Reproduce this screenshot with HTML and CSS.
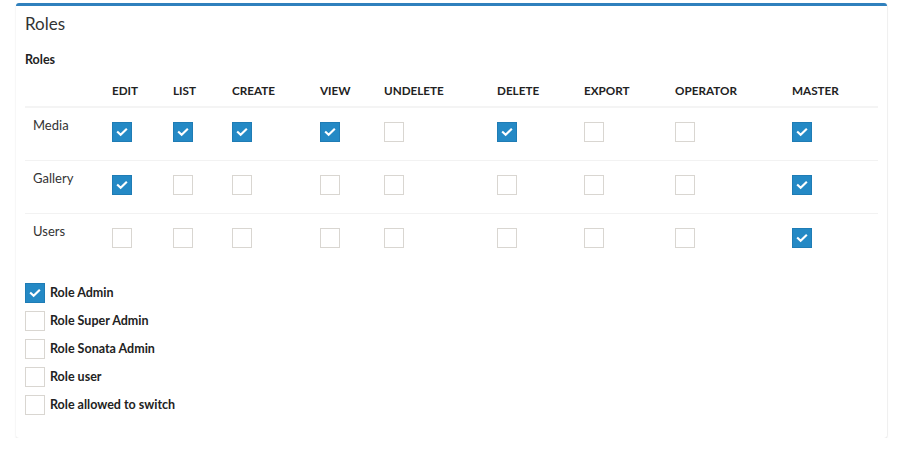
FILE: index.html
```html
<!DOCTYPE html>
<html>
<head>
<meta charset="utf-8">
<link rel="stylesheet" href="styles.css">
</head>
<body>
<div class="box">
  <div class="box-header"><h3 class="box-title">Roles</h3></div>
  <div class="box-body">
    <div class="group-label">Roles</div>
    <table class="roles">
      <colgroup>
        <col class="c-name"><col class="c-edit"><col class="c-list"><col class="c-create"><col class="c-view"><col class="c-undelete"><col class="c-delete"><col class="c-export"><col class="c-operator"><col class="c-master">
      </colgroup>
      <thead>
        <tr><th></th><th>EDIT</th><th>LIST</th><th>CREATE</th><th>VIEW</th><th>UNDELETE</th><th>DELETE</th><th>EXPORT</th><th>OPERATOR</th><th>MASTER</th></tr>
      </thead>
      <tbody>
        <tr>
          <td class="name">Media</td>
          <td><span class="cb on"><svg viewBox="0 0 20 20"><path d="M5.5 10.2l3 2.8 6-5.8"/></svg></span></td>
          <td><span class="cb on"><svg viewBox="0 0 20 20"><path d="M5.5 10.2l3 2.8 6-5.8"/></svg></span></td>
          <td><span class="cb on"><svg viewBox="0 0 20 20"><path d="M5.5 10.2l3 2.8 6-5.8"/></svg></span></td>
          <td><span class="cb on"><svg viewBox="0 0 20 20"><path d="M5.5 10.2l3 2.8 6-5.8"/></svg></span></td>
          <td><span class="cb"></span></td>
          <td><span class="cb on"><svg viewBox="0 0 20 20"><path d="M5.5 10.2l3 2.8 6-5.8"/></svg></span></td>
          <td><span class="cb"></span></td>
          <td><span class="cb"></span></td>
          <td><span class="cb on"><svg viewBox="0 0 20 20"><path d="M5.5 10.2l3 2.8 6-5.8"/></svg></span></td>
        </tr>
        <tr>
          <td class="name">Gallery</td>
          <td><span class="cb on"><svg viewBox="0 0 20 20"><path d="M5.5 10.2l3 2.8 6-5.8"/></svg></span></td>
          <td><span class="cb"></span></td>
          <td><span class="cb"></span></td>
          <td><span class="cb"></span></td>
          <td><span class="cb"></span></td>
          <td><span class="cb"></span></td>
          <td><span class="cb"></span></td>
          <td><span class="cb"></span></td>
          <td><span class="cb on"><svg viewBox="0 0 20 20"><path d="M5.5 10.2l3 2.8 6-5.8"/></svg></span></td>
        </tr>
        <tr>
          <td class="name">Users</td>
          <td><span class="cb"></span></td>
          <td><span class="cb"></span></td>
          <td><span class="cb"></span></td>
          <td><span class="cb"></span></td>
          <td><span class="cb"></span></td>
          <td><span class="cb"></span></td>
          <td><span class="cb"></span></td>
          <td><span class="cb"></span></td>
          <td><span class="cb on"><svg viewBox="0 0 20 20"><path d="M5.5 10.2l3 2.8 6-5.8"/></svg></span></td>
        </tr>
      </tbody>
    </table>
    <ul class="role-list">
      <li><span class="cb on"><svg viewBox="0 0 20 20"><path d="M5.5 10.2l3 2.8 6-5.8"/></svg></span><span class="role-name">Role Admin</span></li>
      <li><span class="cb"></span><span class="role-name">Role Super Admin</span></li>
      <li><span class="cb"></span><span class="role-name">Role Sonata Admin</span></li>
      <li><span class="cb"></span><span class="role-name">Role user</span></li>
      <li><span class="cb"></span><span class="role-name">Role allowed to switch</span></li>
    </ul>
  </div>
</div>
</body>
</html>
```
FILE: styles.css
```css
html, body {
  margin: 0;
  background: #ffffff;
}
body {
  padding: 3px 13px 0 16px;
  font-family: "Lato", "Liberation Sans", sans-serif;
  font-size: 13px;
  color: #333333;
}
.box {
  border-top: 3px solid #2f80bd;
  border-radius: 3px;
  background: #ffffff;
  box-shadow: 0 1px 2px rgba(0, 0, 0, 0.12), 1px 0 1px rgba(0,0,0,0.03);
  padding-bottom: 23px;
}
.box-header {
  padding: 8px 9px 0;
}
.box-title {
  margin: 0;
  font-size: 17px;
  font-weight: normal;
  line-height: 20px;
  color: #333333;
}
.box-body {
  padding: 0 9px;
}
.group-label {
  margin-top: 16px;
  font-weight: bold;
  font-size: 12.5px;
  line-height: 20px;
  color: #222222;
}
.roles {
  width: 853px;
  table-layout: fixed;
  border-collapse: collapse;
  margin-top: 10px;
}
.c-name { width: 79px; }
.c-edit { width: 61px; }
.c-list { width: 59px; }
.c-create { width: 88px; }
.c-view { width: 64px; }
.c-undelete { width: 113px; }
.c-delete { width: 87px; }
.c-export { width: 91px; }
.c-operator { width: 117px; }
.c-master { width: 94px; }
.roles th {
  text-align: left;
  font-weight: bold;
  font-size: 11.7px;
  color: #222222;
  padding: 0 8px 6px;
  line-height: 20px;
  border-bottom: 2px solid #f4f4f4;
}
.roles td {
  padding: 14px 8px 18px;
  vertical-align: top;
  line-height: 20px;
  height: 20px;
}
.roles tbody tr + tr td {
  border-top: 1px solid #f2f2f2;
}
.roles td.name {
  padding-top: 7px;
}
.cb {
  display: block;
  flex: none;
  width: 20px;
  height: 20px;
  box-sizing: border-box;
  border: 1px solid #d9d6d1;
  background: #ffffff;
}
.cb.on {
  background: #2489c5;
  border-color: #1f7cb5;
}
.cb svg {
  display: block;
  width: 18px;
  height: 18px;
}
.cb svg path {
  fill: none;
  stroke: #ffffff;
  stroke-width: 2.4;
  stroke-linecap: square;
}
.role-list {
  list-style: none;
  margin: 17px 0 0;
  padding: 0;
  display: flex;
  flex-direction: column;
  gap: 8px;
}
.role-list li {
  display: flex;
  align-items: center;
  gap: 5px;
  line-height: 20px;
}
.role-name {
  font-weight: bold;
  font-size: 12.5px;
  color: #222222;
}
```
